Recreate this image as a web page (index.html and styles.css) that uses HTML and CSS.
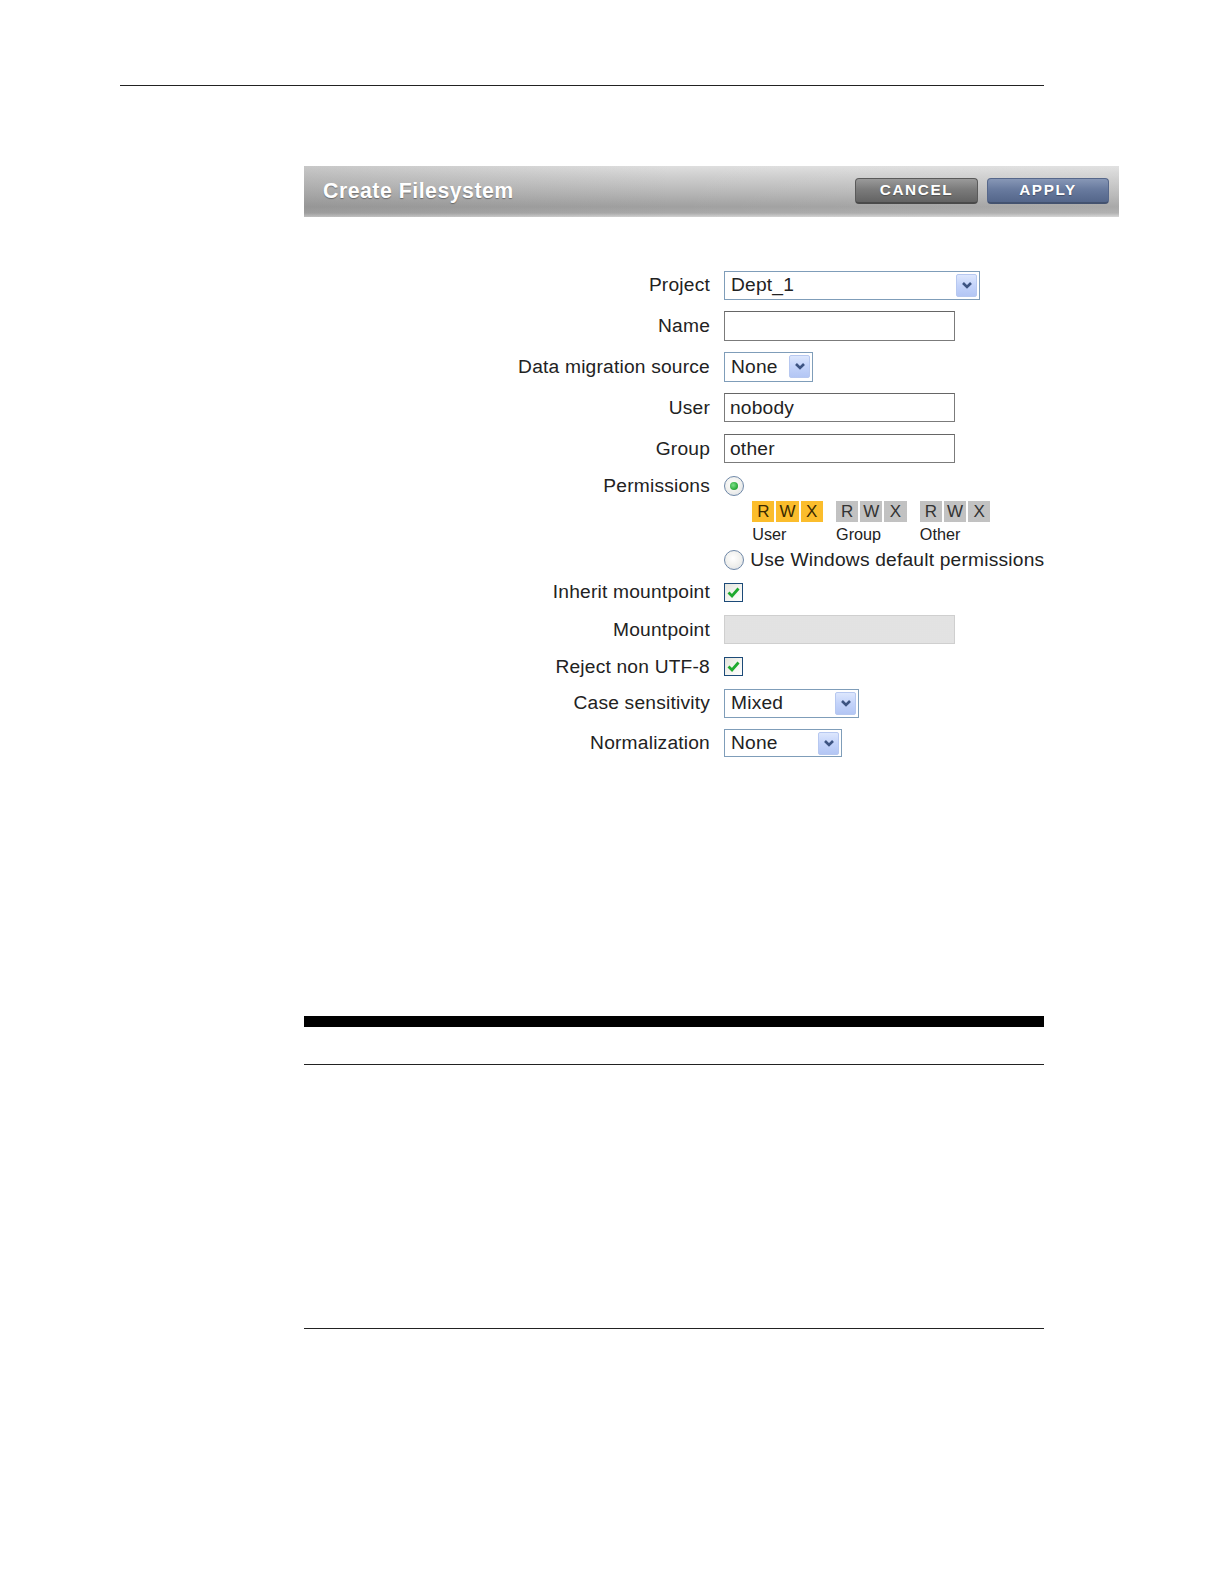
FILE: index.html
```html
<!DOCTYPE html>
<html lang="en">
<head>
<meta charset="utf-8">
<title>Create Filesystem</title>
<link rel="stylesheet" href="styles.css">
</head>
<body>
<div class="top-rule"></div>

<div class="dialog">
  <div class="dialog-header">
    <div class="dialog-title">Create Filesystem</div>
    <div class="header-buttons">
      <div class="btn btn-cancel">CANCEL</div>
      <div class="btn btn-apply">APPLY</div>
    </div>
  </div>

  <div class="form">
    <div class="row row-field">
      <div class="label">Project</div>
      <div class="select select-project"><span class="select-value">Dept_1</span><span class="select-arrow"><svg width="12" height="9" viewBox="0 0 12 9"><path d="M2 2 L6 6 L10 2" fill="none" stroke="#3d5482" stroke-width="2.6"/></svg></span></div>
    </div>
    <div class="row row-field">
      <div class="label">Name</div>
      <div class="text-input"></div>
    </div>
    <div class="row row-field">
      <div class="label">Data migration source</div>
      <div class="select select-migration"><span class="select-value">None</span><span class="select-arrow"><svg width="12" height="9" viewBox="0 0 12 9"><path d="M2 2 L6 6 L10 2" fill="none" stroke="#3d5482" stroke-width="2.6"/></svg></span></div>
    </div>
    <div class="row row-field">
      <div class="label">User</div>
      <div class="text-input">nobody</div>
    </div>
    <div class="row row-field">
      <div class="label">Group</div>
      <div class="text-input">other</div>
    </div>

    <div class="row row-perms">
      <div class="label label-perms">Permissions</div>
      <div class="perms">
        <div class="radio radio-on"><span class="radio-dot"></span></div>
        <div class="perm-groups">
          <div class="perm-group">
            <div class="perm-boxes"><span class="pbox on">R</span><span class="pbox on">W</span><span class="pbox on">X</span></div>
            <div class="perm-name">User</div>
          </div>
          <div class="perm-group">
            <div class="perm-boxes"><span class="pbox">R</span><span class="pbox">W</span><span class="pbox">X</span></div>
            <div class="perm-name">Group</div>
          </div>
          <div class="perm-group">
            <div class="perm-boxes"><span class="pbox">R</span><span class="pbox">W</span><span class="pbox">X</span></div>
            <div class="perm-name">Other</div>
          </div>
        </div>
        <div class="radio-line">
          <div class="radio"></div>
          <span class="radio-text">Use Windows default permissions</span>
        </div>
      </div>
    </div>

    <div class="row row-check row-inherit">
      <div class="label">Inherit mountpoint</div>
      <div class="checkbox"><svg width="17" height="17" viewBox="0 0 17 17"><path d="M3.5 8.5 L7 12 L13.5 4.5" fill="none" stroke="#1faa2e" stroke-width="2.8"/></svg></div>
    </div>
    <div class="row row-field row-mount">
      <div class="label">Mountpoint</div>
      <div class="text-input disabled"></div>
    </div>
    <div class="row row-check row-reject">
      <div class="label">Reject non UTF-8</div>
      <div class="checkbox"><svg width="17" height="17" viewBox="0 0 17 17"><path d="M3.5 8.5 L7 12 L13.5 4.5" fill="none" stroke="#1faa2e" stroke-width="2.8"/></svg></div>
    </div>
    <div class="row row-select row-case">
      <div class="label">Case sensitivity</div>
      <div class="select select-case"><span class="select-value">Mixed</span><span class="select-arrow"><svg width="12" height="9" viewBox="0 0 12 9"><path d="M2 2 L6 6 L10 2" fill="none" stroke="#3d5482" stroke-width="2.6"/></svg></span></div>
    </div>
    <div class="row row-select">
      <div class="label">Normalization</div>
      <div class="select select-norm"><span class="select-value">None</span><span class="select-arrow"><svg width="12" height="9" viewBox="0 0 12 9"><path d="M2 2 L6 6 L10 2" fill="none" stroke="#3d5482" stroke-width="2.6"/></svg></span></div>
    </div>
  </div>
</div>

<div class="footer-rules">
  <div class="thick-bar"></div>
  <div class="thin-rule first"></div>
  <div class="thin-rule second"></div>
</div>
</body>
</html>
```

FILE: styles.css
```css
html, body {
  margin: 0;
  padding: 0;
  background: #ffffff;
}

body {
  padding-top: 85px;
  font-family: "Liberation Sans", Arial, sans-serif;
  color: #222222;
}

.top-rule {
  margin: 0 0 0 120px;
  width: 924px;
  height: 0;
  border-top: 1px solid #222222;
}

.dialog {
  margin: 80px 0 0 304px;
}

.dialog-header {
  width: 815px;
  height: 50.5px;
  display: flex;
  align-items: center;
  justify-content: space-between;
  box-sizing: border-box;
  padding: 0 10px 0 19px;
  background:
    linear-gradient(90deg, rgba(110,110,110,0.2) 0%, rgba(255,255,255,0) 45%, rgba(255,255,255,0.1) 100%),
    linear-gradient(180deg, #dedede 0%, #cdcdcd 22%, #b8b8b8 50%, #a0a0a0 80%, #a9a9a9 92%, #d2d2d2 100%);
}

.dialog-title {
  color: #ffffff;
  font-family: "Liberation Sans", Arial, sans-serif;
  font-weight: bold;
  font-size: 21.3px;
  letter-spacing: 0.5px;
  text-shadow: 0 1px 1px rgba(0,0,0,0.35);
  margin-top: 1px;
}

.header-buttons {
  display: flex;
  gap: 9px;
  margin-top: -1px;
}

.btn {
  width: 123px;
  height: 25.5px;
  box-sizing: border-box;
  border-radius: 4px;
  display: flex;
  align-items: center;
  justify-content: center;
  color: #ffffff;
  font-family: "Liberation Sans", Arial, sans-serif;
  font-weight: bold;
  font-size: 15.3px;
  letter-spacing: 1.6px;
  text-shadow: 0 1px 1px rgba(0,0,0,0.3);
}

.btn-cancel {
  background: linear-gradient(180deg, #9a9a9a 0%, #7b7b7b 45%, #636363 100%);
  border: 1px solid #5a5a5a;
  border-bottom: 2px solid #4a4a4a;
}

.btn-apply {
  width: 122px;
  background: linear-gradient(180deg, #8797b6 0%, #687a9e 45%, #54668a 100%);
  border: 1px solid #56678a;
  border-bottom: 2px solid #43526f;
}

.form {
  padding-top: 54px;
  display: flex;
  flex-direction: column;
  gap: 11.6px;
}

.row {
  display: flex;
  align-items: center;
  gap: 14px;
}

.label {
  width: 406px;
  flex: none;
  text-align: right;
  font-size: 19.2px;
  letter-spacing: 0.2px;
  color: #222222;
  line-height: 22px;
}

.row-field {
  height: 29.3px;
}

.row-select {
  height: 28.3px;
}

.row-check {
  height: 19px;
}

.row-inherit {
  margin-top: 1.2px;
}

.row-mount {
  margin-top: 1.5px;
}

.row-reject {
  margin-top: 1.6px;
}

.row-case {
  margin-top: 1.3px;
}

.text-input {
  width: 231px;
  height: 29.3px;
  box-sizing: border-box;
  border: 1px solid #7b7b7b;
  border-top-color: #666666;
  background: #ffffff;
  font-size: 19.2px;
  letter-spacing: 0.2px;
  line-height: 27px;
  padding-left: 5px;
  color: #222222;
}

.text-input.disabled {
  background-color: #ececec;
  background-image: radial-gradient(#d6d6d6 0.6px, transparent 0.8px);
  background-size: 2px 2px;
  border-color: #cfcfcf;
}

.select {
  height: 29.3px;
  box-sizing: border-box;
  border: 1px solid #7f9db9;
  background: #ffffff;
  display: flex;
  align-items: center;
  justify-content: space-between;
  padding: 0 2px 0 6px;
}

.row-select .select {
  height: 28.3px;
}

.select-project { width: 256px; }
.select-migration { width: 89px; }
.select-case { width: 135px; }
.select-norm { width: 118px; }

.select-value {
  font-size: 19.2px;
  letter-spacing: 0.2px;
  color: #222222;
}

.select-arrow {
  width: 21px;
  height: 23px;
  box-sizing: border-box;
  border: 1px solid #b7c8f0;
  border-radius: 2px;
  background: linear-gradient(180deg, #dde7fd 0%, #c3d3fa 50%, #b3c6f4 100%);
  display: flex;
  align-items: center;
  justify-content: center;
}

.row-perms {
  align-items: flex-start;
  margin-top: 1.3px;
}

.label-perms {
  line-height: 20.2px;
}

.perms {
  display: flex;
  flex-direction: column;
}

.radio {
  width: 20.2px;
  height: 20.2px;
  box-sizing: border-box;
  border-radius: 50%;
  border: 1.5px solid #6f88a8;
  background: radial-gradient(circle at 45% 40%, #ffffff 0%, #f1f1ee 50%, #d6dbe4 100%);
  display: flex;
  align-items: center;
  justify-content: center;
  flex: none;
}

.radio-dot {
  width: 8px;
  height: 8px;
  border-radius: 50%;
  background: radial-gradient(circle at 40% 40%, #7ee08a 0%, #2fae3f 60%, #1d8a2c 100%);
}

.perm-groups {
  display: flex;
  gap: 13.2px;
  margin: 5px 0 0 28.3px;
}

.perm-group {
  display: flex;
  flex-direction: column;
}

.perm-boxes {
  display: flex;
  gap: 2px;
}

.pbox {
  width: 22.2px;
  height: 20.2px;
  display: flex;
  align-items: center;
  justify-content: center;
  font-size: 17px;
  color: #333333;
  background-color: #c9c9c9;
  background-image: radial-gradient(#b9b9b9 0.6px, transparent 0.8px);
  background-size: 2px 2px;
}

.pbox.on {
  background-color: #fbbd2c;
  background-image: none;
  color: #3a2a00;
}

.perm-name {
  font-size: 16.2px;
  line-height: 20.2px;
  margin-top: 2px;
  color: #222222;
}

.radio-line {
  display: flex;
  align-items: center;
  gap: 6px;
  margin-top: 6px;
}

.radio-text {
  font-size: 19.2px;
  letter-spacing: 0.2px;
  line-height: 20.2px;
  color: #222222;
}

.checkbox {
  width: 19.2px;
  height: 19.2px;
  box-sizing: border-box;
  border: 1px solid #1c4a78;
  background: linear-gradient(135deg, #e4e4dc 0%, #f6f6f2 60%, #ffffff 100%);
  display: flex;
  align-items: center;
  justify-content: center;
}

.footer-rules {
  margin: 259px 0 0 304px;
  width: 740px;
}

.thick-bar {
  height: 10.1px;
  background: #000000;
}

.thin-rule {
  height: 0;
  border-top: 1px solid #222222;
}

.thin-rule.first {
  margin-top: 37.3px;
}

.thin-rule.second {
  margin-top: 263.2px;
}
```
